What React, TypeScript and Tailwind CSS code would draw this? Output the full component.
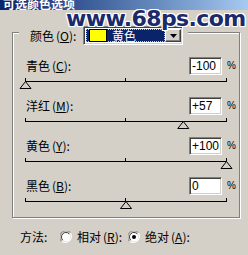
import React from "react";

const BG = "#d4d0c8";

function Track({ value }: { value: number }) {
  const cx = 6.5 + ((value + 100) / 200) * 201;
  return (
    <svg width="214" height="19" className="block" viewBox="0 0 214 19">
      <line x1="6" y1="3.5" x2="208" y2="3.5" stroke="#000" strokeWidth="1" />
      <line x1="6.5" y1="0" x2="6.5" y2="4" stroke="#000" strokeWidth="1" />
      <line x1="106.5" y1="0" x2="106.5" y2="4" stroke="#000" strokeWidth="1" />
      <line x1="207.5" y1="0" x2="207.5" y2="4" stroke="#000" strokeWidth="1" />
      <polygon
        points={`${cx},3.5 ${cx - 5.5},10.5 ${cx + 5.5},10.5`}
        fill={BG}
        stroke="#000"
        strokeWidth="1"
      />
    </svg>
  );
}

function Label({ name, k }: { name: string; k: string }) {
  return (
    <span className="whitespace-nowrap">
      {name}
      <span className="ml-[2px]">(</span>
      <span className="underline underline-offset-[1px]">{k}</span>
      <span>):</span>
    </span>
  );
}

function SliderRow({ name, k, text, value }: { name: string; k: string; text: string; value: number }) {
  return (
    <div className="flex flex-col">
      <div className="flex h-[18px] items-center ml-[13px]">
        <div className="w-[163px] text-[12px] leading-[12px] text-black">
          <Label name={name} k={k} />
        </div>
        <div className="w-[33px] h-[18px] bg-white border border-t-[#808080] border-l-[#808080] border-r-white border-b-white shadow-[inset_1px_1px_0_#404040,inset_-1px_-1px_0_#d4d0c8] flex items-center pl-[2px] text-[12px] leading-[12px] text-black [font-family:'Liberation_Sans',Arial,sans-serif]">
          {text}
        </div>
        <div className="ml-[5px] text-[10px] leading-[10px] text-black [font-family:'Liberation_Sans',Arial,sans-serif]">%</div>
      </div>
      <div className="mt-[3px] ml-[6px]">
        <Track value={value} />
      </div>
    </div>
  );
}

function Radio({ checked }: { checked: boolean }) {
  return (
    <svg width="12" height="12" viewBox="0 0 12 12" className="block">
      <path d="M10.5 1.5 A6 6 0 0 0 1.5 10.5" fill="none" stroke="#808080" strokeWidth="1" />
      <path d="M1.8 10.2 A6 6 0 0 0 10.2 1.8" fill="none" stroke="#ffffff" strokeWidth="1.2" />
      <circle cx="6" cy="6" r="4.5" fill="#ffffff" />
      <path d="M9.2 2.8 A4.5 4.5 0 0 0 2.8 9.2" fill="none" stroke="#404040" strokeWidth="1" />
      {checked && <circle cx="6" cy="6" r="2" fill="#000" />}
    </svg>
  );
}

export default function App() {
  return (
    <div className="relative w-[248px] h-[255px] overflow-hidden bg-[#d4d0c8] [font-family:'Noto_Sans_CJK_SC','Noto_Sans',sans-serif] text-black">
      <div className="h-[10px] overflow-hidden bg-gradient-to-r from-[#0a246a] to-[#a6caf0]">
        <div className="ml-[3px] -mt-[2px] text-[12px] leading-[12px] font-bold text-white">可选颜色选项</div>
      </div>

      <div className="mt-[22px] ml-[12px] w-[228px] h-[186px] border border-[#808080] shadow-[inset_1px_1px_0_#ffffff,1px_1px_0_#ffffff]">
        <div className="-mt-[7px] ml-[6px] w-fit h-[19px] flex items-center bg-[#d4d0c8] pl-[11px] pr-[5px]">
          <div className="w-[53px] text-[12px] leading-[12px]">
            <Label name="颜色" k="O" />
          </div>
          <div className="w-[100px] h-[19px] flex border border-t-[#808080] border-l-[#808080] border-r-white border-b-white shadow-[inset_1px_1px_0_#404040,inset_-1px_-1px_0_#d4d0c8] bg-white p-[2px] pr-[1px]">
            <div className="flex-1 bg-[#0a246a] border border-dotted border-[#c0c0ff] flex items-center pl-[2px]">
              <div className="w-[18px] h-[13px] bg-[#ffff00] border border-black" />
              <span className="ml-[5px] text-[12px] leading-[12px] text-white">黄色</span>
            </div>
            <div className="w-[16px] h-full bg-[#d4d0c8] border border-t-white border-l-white border-r-[#404040] border-b-[#404040] shadow-[inset_-1px_-1px_0_#808080] flex items-center justify-center">
              <svg width="7" height="4" viewBox="0 0 7 4" className="block">
                <polygon points="0,0 7,0 3.5,4" fill="#000" />
              </svg>
            </div>
          </div>
        </div>

        <div className="mt-[12px] flex flex-col">
          <SliderRow name="青色" k="C" text="-100" value={-100} />
          <SliderRow name="洋红" k="M" text="+57" value={57} />
          <SliderRow name="黄色" k="Y" text="+100" value={100} />
          <SliderRow name="黑色" k="B" text="0" value={0} />
        </div>
      </div>

      <div className="mt-[13px] ml-[20px] h-[12px] flex items-center text-[12px] leading-[12px]">
        <div className="w-[40px]">方法:</div>
        <Radio checked={false} />
        <div className="ml-[5px] w-[51px]">
          <Label name="相对" k="R" />
        </div>
        <Radio checked={true} />
        <div className="ml-[5px]">
          <Label name="绝对" k="A" />
        </div>
      </div>

      <div className="absolute left-[66px] top-[8px] text-[22px] leading-[22px] font-bold tracking-[-0.6px] text-[#1b2a6b] [font-family:'DejaVu_Sans',sans-serif] [text-shadow:1px_1px_0_#fff,-1px_-1px_0_#fff,1px_-1px_0_#fff,-1px_1px_0_#fff,0_1px_0_#fff,1px_0_0_#fff,0_-1px_0_#fff,-1px_0_0_#fff]">
        www.68ps.com
      </div>
    </div>
  );
}
